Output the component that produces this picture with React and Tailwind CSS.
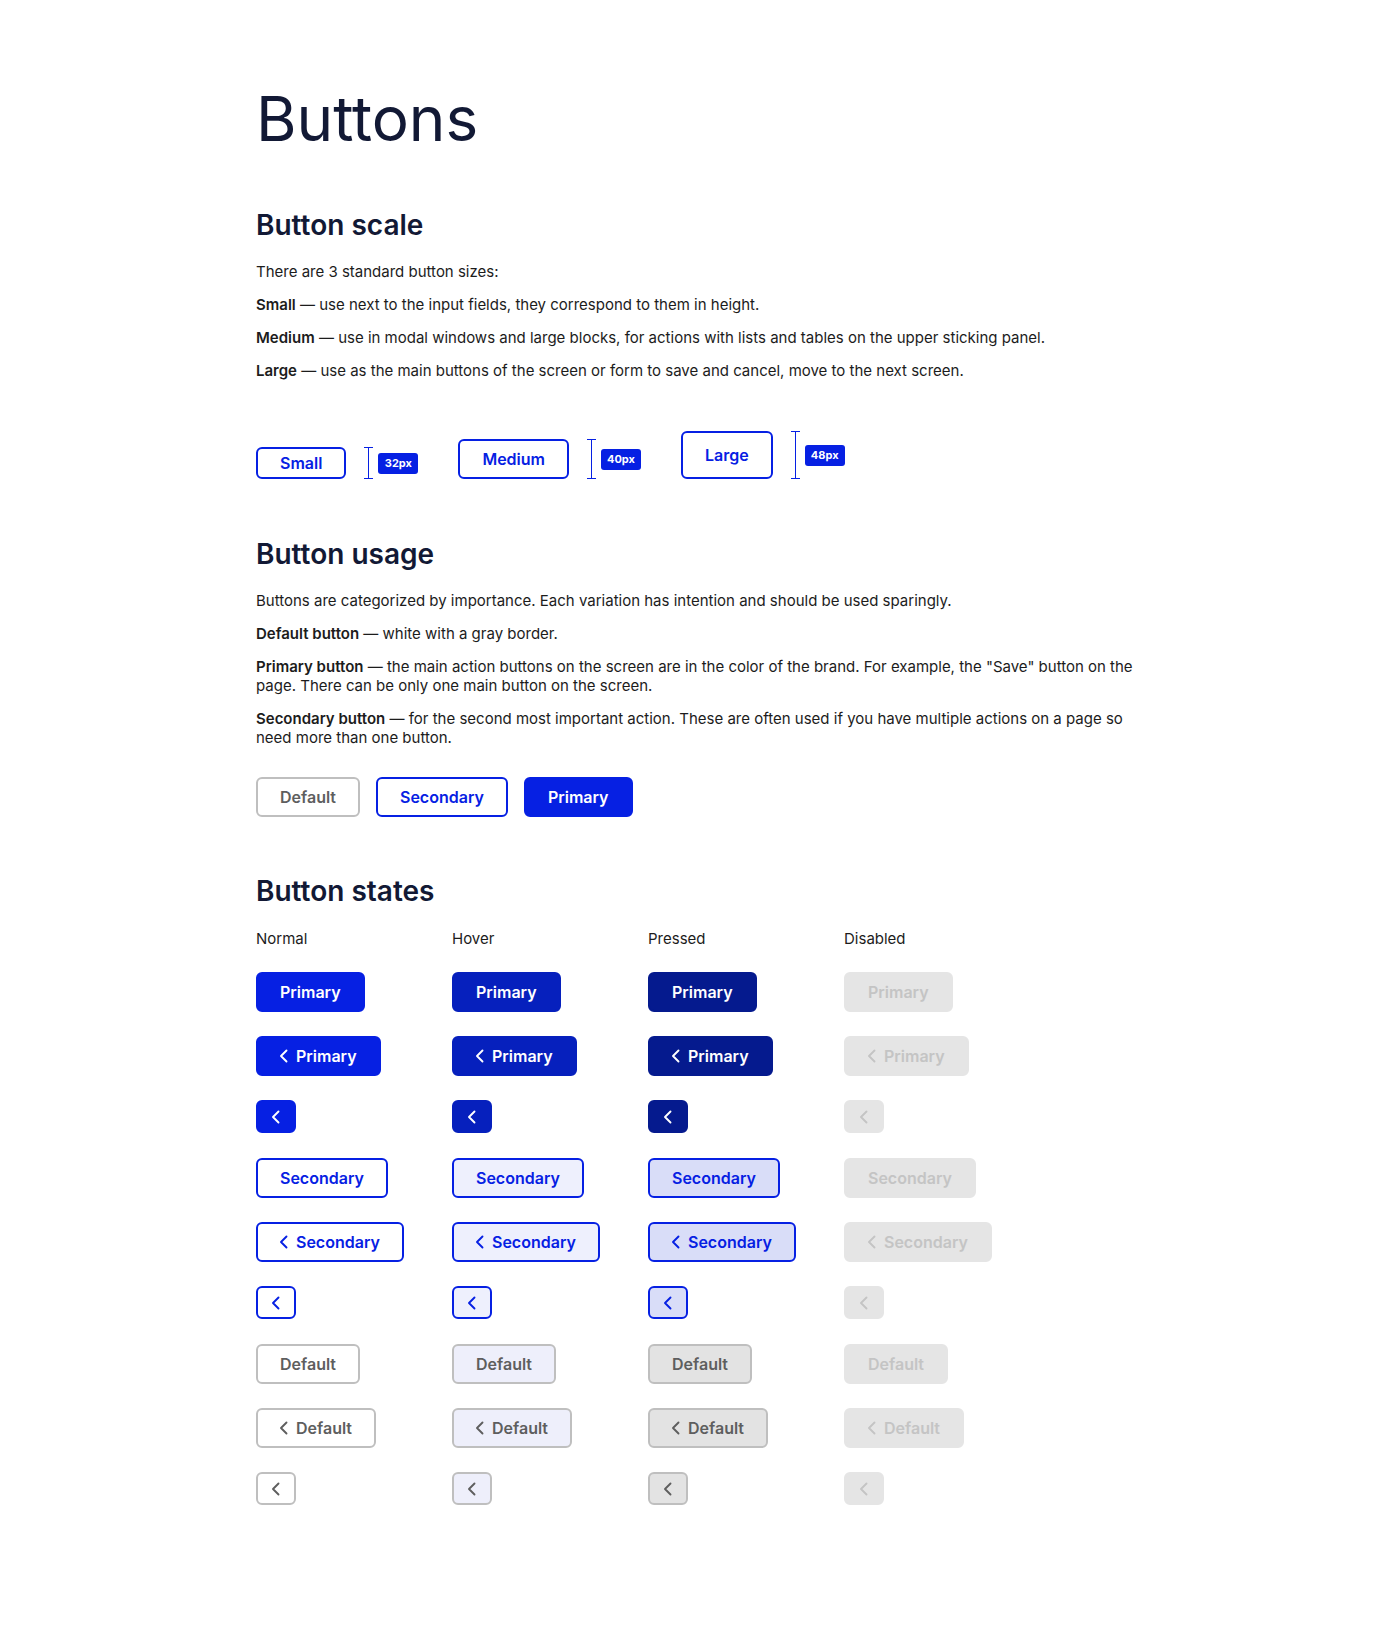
import React from "react";

const Chevron = ({ className = "" }) => (
  <svg width="16" height="16" viewBox="0 0 16 16" fill="none" className={className}>
    <path d="M10.5 2.5 L5 8 L10.5 13.5" stroke="currentColor" strokeWidth="1.9" strokeLinecap="round" strokeLinejoin="round" />
  </svg>
);

const variants = {
  primary: [
    "bg-[#0620E3] border-[#0620E3] text-white",
    "bg-[#0620BD] border-[#0620BD] text-white",
    "bg-[#051A8E] border-[#051A8E] text-white",
    "bg-[#E5E5E5] border-[#E5E5E5] text-[#C4C4C4]",
  ],
  secondary: [
    "bg-white border-[#0620E3] text-[#0620E3]",
    "bg-[#EEF0FD] border-[#0620E3] text-[#0620E3]",
    "bg-[#D9DDF8] border-[#0620E3] text-[#0620E3]",
    "bg-[#E5E5E5] border-[#E5E5E5] text-[#C4C4C4]",
  ],
  default: [
    "bg-white border-[#BFBFBF] text-[#5E5E5E]",
    "bg-[#EEEFFB] border-[#BFBFBF] text-[#5E5E5E]",
    "bg-[#E3E3E3] border-[#BFBFBF] text-[#5E5E5E]",
    "bg-[#E5E5E5] border-[#E5E5E5] text-[#C4C4C4]",
  ],
};

const labels = { primary: "Primary", secondary: "Secondary", default: "Default" };

function StateButton({ kind, state, mode }) {
  const cls = variants[kind][state];
  if (mode === "icon") {
    return (
      <div className={`flex h-[33px] w-10 items-center justify-center rounded-md border-2 ${cls}`}>
        <Chevron />
      </div>
    );
  }
  if (mode === "chev") {
    return (
      <div className={`flex h-10 items-center gap-1 rounded-md border-2 pl-[18px] pr-[22px] text-[16px] font-semibold ${cls}`}>
        <Chevron />
        <span>{labels[kind]}</span>
      </div>
    );
  }
  return (
    <div className={`flex h-10 items-center rounded-md border-2 px-[22px] text-[16px] font-semibold ${cls}`}>
      {labels[kind]}
    </div>
  );
}

function Ruler({ h }) {
  return (
    <div className={`flex w-[9px] flex-col items-center ${h}`}>
      <div className="h-px w-[9px] bg-[#0620E3]" />
      <div className="w-px flex-1 bg-[#0620E3]" />
      <div className="h-px w-[9px] bg-[#0620E3]" />
    </div>
  );
}

function Badge({ children }) {
  return (
    <div className="flex h-[21px] w-10 items-center justify-center rounded-[3px] bg-[#0620E3] text-[11px] font-bold text-white">
      {children}
    </div>
  );
}

function ScaleItem({ label, h, badge }) {
  return (
    <div className="flex items-center">
      <div className={`flex ${h} items-center rounded-md border-2 border-[#0620E3] px-[22px] text-[16px] font-semibold text-[#0620E3]`}>
        {label}
      </div>
      <div className="ml-[18px]">
        <Ruler h={h} />
      </div>
      <div className="ml-[5px]">
        <Badge>{badge}</Badge>
      </div>
    </div>
  );
}

export default function App() {
  const rows = [
    ["primary", "text"],
    ["primary", "chev"],
    ["primary", "icon"],
    ["secondary", "text"],
    ["secondary", "chev"],
    ["secondary", "icon"],
    ["default", "text"],
    ["default", "chev"],
    ["default", "icon"],
  ];
  return (
    <div className="min-h-[1637px] w-full bg-white font-['Inter',sans-serif] text-[#1C1C1C]">
      <div className="w-[1144px] pl-[256px] pt-[88px]">
        <h1 className="text-[62px] font-normal leading-none text-[#121935]">Buttons</h1>

        <h2 className="mt-[57px] text-[28px] font-semibold leading-[36px] text-[#121935]">Button scale</h2>
        <div className="mt-[19px] flex flex-col gap-[14px] text-[15px] leading-[19px]">
          <p>There are 3 standard button sizes:</p>
          <p><span className="font-semibold">Small</span> — use next to the input fields, they correspond to them in height.</p>
          <p><span className="font-semibold">Medium</span> — use in modal windows and large blocks, for actions with lists and tables on the upper sticking panel.</p>
          <p><span className="font-semibold">Large</span> — use as the main buttons of the screen or form to save and cancel, move to the next screen.</p>
        </div>

        <div className="mt-[51px] flex items-end gap-10">
          <ScaleItem label="Small" h="h-8" badge="32px" />
          <ScaleItem label="Medium" h="h-10" badge="40px" />
          <ScaleItem label="Large" h="h-12" badge="48px" />
        </div>

        <h2 className="mt-[57px] text-[28px] font-semibold leading-[36px] text-[#121935]">Button usage</h2>
        <div className="mt-[19px] flex flex-col gap-[14px] text-[15px] leading-[19px]">
          <p>Buttons are categorized by importance. Each variation has intention and should be used sparingly.</p>
          <p><span className="font-semibold">Default button</span> — white with a gray border.</p>
          <p><span className="font-semibold">Primary button</span> — the main action buttons on the screen are in the color of the brand. For example, the "Save" button on the page. There can be only one main button on the screen.</p>
          <p><span className="font-semibold">Secondary button</span> — for the second most important action. These are often used if you have multiple actions on a page so need more than one button.</p>
        </div>

        <div className="mt-[30px] flex items-center gap-4">
          <StateButton kind="default" state={0} mode="text" />
          <StateButton kind="secondary" state={0} mode="text" />
          <StateButton kind="primary" state={0} mode="text" />
        </div>

        <h2 className="mt-[56px] text-[28px] font-semibold leading-[36px] text-[#121935]">Button states</h2>
        <div className="mt-5 grid grid-cols-[196px_196px_196px_196px] text-[15px] leading-[20px]">
          <div>Normal</div>
          <div>Hover</div>
          <div>Pressed</div>
          <div>Disabled</div>
        </div>
        <div className="mt-[23px] flex flex-col gap-6">
          {rows.map(([kind, mode], i) => (
            <div key={i} className={`grid grid-cols-[196px_196px_196px_196px] items-start ${mode === "icon" ? "h-[34px]" : "h-10"}`}>
              {[0, 1, 2, 3].map((s) => (
                <div key={s} className="flex">
                  <StateButton kind={kind} state={s} mode={mode} />
                </div>
              ))}
            </div>
          ))}
        </div>
      </div>
    </div>
  );
}
